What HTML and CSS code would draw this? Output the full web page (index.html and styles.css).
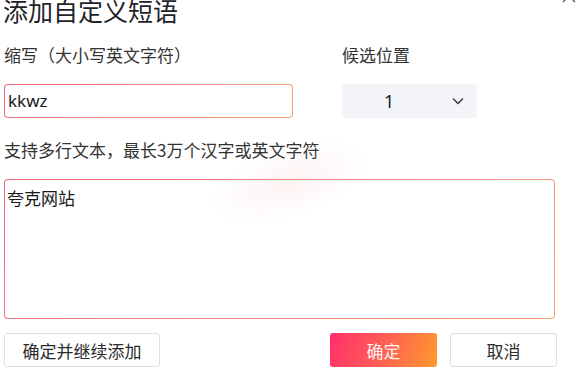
FILE: index.html
```html
<!DOCTYPE html>
<html lang="zh-CN">
<head>
    <meta charset="UTF-8">
    <title>添加自定义短语</title>
    <link rel="stylesheet" href="styles.css">
</head>
<body>
    <div class="dialog">
        <button class="close-btn" aria-label="关闭">
            <svg width="14" height="14" viewBox="0 0 14 14">
                <path d="M1 1 L13 13 M13 1 L1 13" stroke="#4a4f59" stroke-width="1.2" fill="none"/>
            </svg>
        </button>

        <h1 class="title">添加自定义短语</h1>

        <div class="form-row">
            <div class="field abbr-field">
                <label class="field-label">缩写（大小写英文字符）</label>
                <div class="gradient-box input-box">
                    <input type="text" class="text-input" value="kkwz">
                </div>
            </div>
            <div class="field pos-field">
                <label class="field-label">候选位置</label>
                <div class="select-box">
                    <span class="select-value">1</span>
                    <svg class="chevron" width="12" height="8" viewBox="0 0 12 8">
                        <path d="M1 1.5 L6 6.5 L11 1.5" stroke="#333" stroke-width="1.3" fill="none"/>
                    </svg>
                </div>
            </div>
        </div>

        <label class="field-label content-label">支持多行文本，最长3万个汉字或英文字符</label>
        <div class="gradient-box area-box">
            <textarea class="text-area">夸克网站</textarea>
        </div>

        <div class="actions">
            <button class="btn btn-continue">确定并继续添加</button>
            <div class="actions-right">
                <button class="btn btn-primary">确定</button>
                <button class="btn btn-cancel">取消</button>
            </div>
        </div>

        <!-- faint watermark smear over the text area -->
        <div class="watermark"></div>
    </div>
</body>
</html>
```

FILE: styles.css
```css
* {
    box-sizing: border-box;
}

body {
    margin: 0;
    background-color: #fff;
    font-family: "Noto Sans CJK SC", "Noto Sans", sans-serif;
    color: #333;
    overflow: hidden;
}

.dialog {
    position: relative;
    width: 588px;
    height: 372px;
    padding: 0 0 0 4px;
}

.close-btn {
    position: absolute;
    top: -8px;
    left: 562px;
    padding: 0;
    border: none;
    background: none;
    line-height: 0;
    cursor: pointer;
}

.title {
    margin: -3px 0 0 -1px;
    font-size: 25px;
    line-height: 26px;
    font-weight: normal;
    color: #1f2329;
}

.form-row {
    display: flex;
    gap: 49px;
    margin-top: 21px;
}

.abbr-field {
    width: 289px;
}

.pos-field {
    width: 135px;
}

.field-label {
    display: block;
    font-size: 17px;
    line-height: 22px;
    color: #333;
}

.field .field-label {
    margin-bottom: 18px;
}

/* pink-to-orange border */
.gradient-box {
    padding: 1px;
    border-radius: 4px;
    background: linear-gradient(135deg, #ef6a7c 0%, #f28c80 55%, #f5a472 100%);
}

.input-box {
    height: 34px;
}

.text-input,
.text-area {
    display: block;
    width: 100%;
    height: 100%;
    border: none;
    border-radius: 3px;
    outline: none;
    background: #fff;
    color: #1a1a1a;
}

.text-input {
    padding: 0 3px 1px;
    font-family: "Noto Sans", sans-serif;
    font-size: 17px;
}

.select-box {
    display: flex;
    align-items: center;
    height: 34px;
    padding: 0 13px 0 42px;
    border-radius: 3px;
    background-color: #f3f5f9;
}

.select-value {
    flex: 1;
    font-family: "Noto Sans", sans-serif;
    font-size: 18px;
    color: #222;
}

.content-label {
    margin-top: 21px;
}

.area-box {
    width: 551px;
    height: 140px;
    margin-top: 18px;
}

.text-area {
    padding: 7px 2px;
    resize: none;
    font-family: "Noto Sans CJK SC", sans-serif;
    font-size: 17px;
    line-height: 22px;
}

.actions {
    display: flex;
    justify-content: space-between;
    width: 553px;
    margin-top: 14px;
}

.actions-right {
    display: flex;
    gap: 13px;
}

.btn {
    height: 34px;
    padding: 0;
    border: 1px solid #dcdfe6;
    border-radius: 3px;
    background: #fff;
    font-family: "Noto Sans CJK SC", sans-serif;
    font-size: 17px;
    color: #2b2b2b;
    cursor: pointer;
}

.btn-continue {
    width: 156px;
}

.btn-primary {
    width: 107px;
    border: none;
    background: linear-gradient(110deg, #ff2f6a 0%, #ff5a58 45%, #ff9a2c 100%);
    color: #fff1ee;
}

.btn-cancel {
    width: 107px;
}

.watermark {
    position: absolute;
    left: 205px;
    top: 150px;
    width: 170px;
    height: 70px;
    border-radius: 40%;
    background: radial-gradient(ellipse at center, rgba(240, 150, 150, 0.12), rgba(240, 150, 150, 0) 70%);
    transform: rotate(-18deg);
    pointer-events: none;
}
```
